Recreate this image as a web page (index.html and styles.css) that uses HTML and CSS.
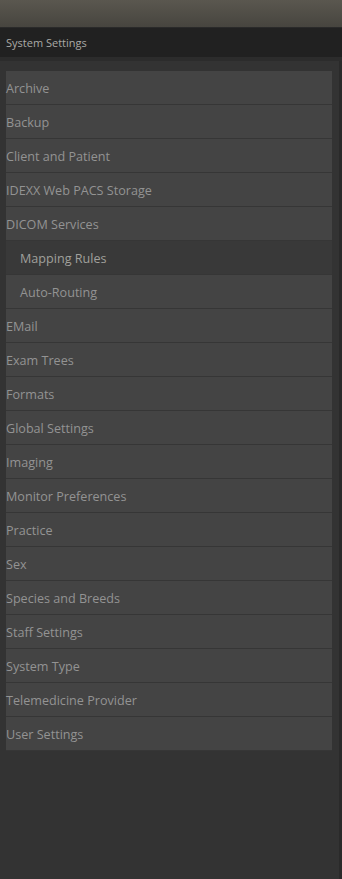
FILE: index.html
```html
<!DOCTYPE html>
<html lang="en">
<head>
  <meta charset="UTF-8">
  <title>System Settings</title>
  <link rel="stylesheet" href="styles.css">
</head>
<body>
  <div class="topbar"></div>

  <div class="panel-title">System Settings</div>

  <div class="panel">
    <ul class="menu">
      <li>Archive</li>
      <li>Backup</li>
      <li>Client and Patient</li>
      <li>IDEXX Web PACS Storage</li>
      <li>DICOM Services</li>
      <li class="sub selected">Mapping Rules</li>
      <li class="sub">Auto-Routing</li>
      <li>EMail</li>
      <li>Exam Trees</li>
      <li>Formats</li>
      <li>Global Settings</li>
      <li>Imaging</li>
      <li>Monitor Preferences</li>
      <li>Practice</li>
      <li>Sex</li>
      <li>Species and Breeds</li>
      <li>Staff Settings</li>
      <li>System Type</li>
      <li>Telemedicine Provider</li>
      <li>User Settings</li>
    </ul>
  </div>
</body>
</html>
```

FILE: styles.css
```css
* { margin: 0; padding: 0; box-sizing: border-box; }
html, body {
  height: 100%;
}
body {
  font-family: 'Open Sans', 'DejaVu Sans', sans-serif;
  background: #333;
  color: #939393;
  display: flex;
  flex-direction: column;
}

.topbar {
  height: 28px;
  background: linear-gradient(to bottom, #5a574f, #47453f);
  border-bottom: 1px solid #2a2a2a;
  flex-shrink: 0;
}

.panel-title {
  height: 33px;
  background: #212121;
  border-bottom: 4px solid #2c2c2c;
  color: #aaaaa6;
  font-size: 11px;
  padding: 7px 6px 0;
  flex-shrink: 0;
}

.panel {
  flex: 1;
  background: #333;
  border-right: 3px solid #2a2a2a;
  padding: 10px 7px 0 6px;
}

.menu {
  list-style: none;
}
.menu li {
  height: 34px;
  line-height: 32px;
  padding-top: 2px;
  background: #444;
  border-bottom: 1px solid #363636;
  font-size: 12.6px;
  white-space: nowrap;
}
.menu li.sub {
  padding-left: 14px;
}
.menu li.selected {
  background: #393939;
  color: #a0a09c;
}
```
